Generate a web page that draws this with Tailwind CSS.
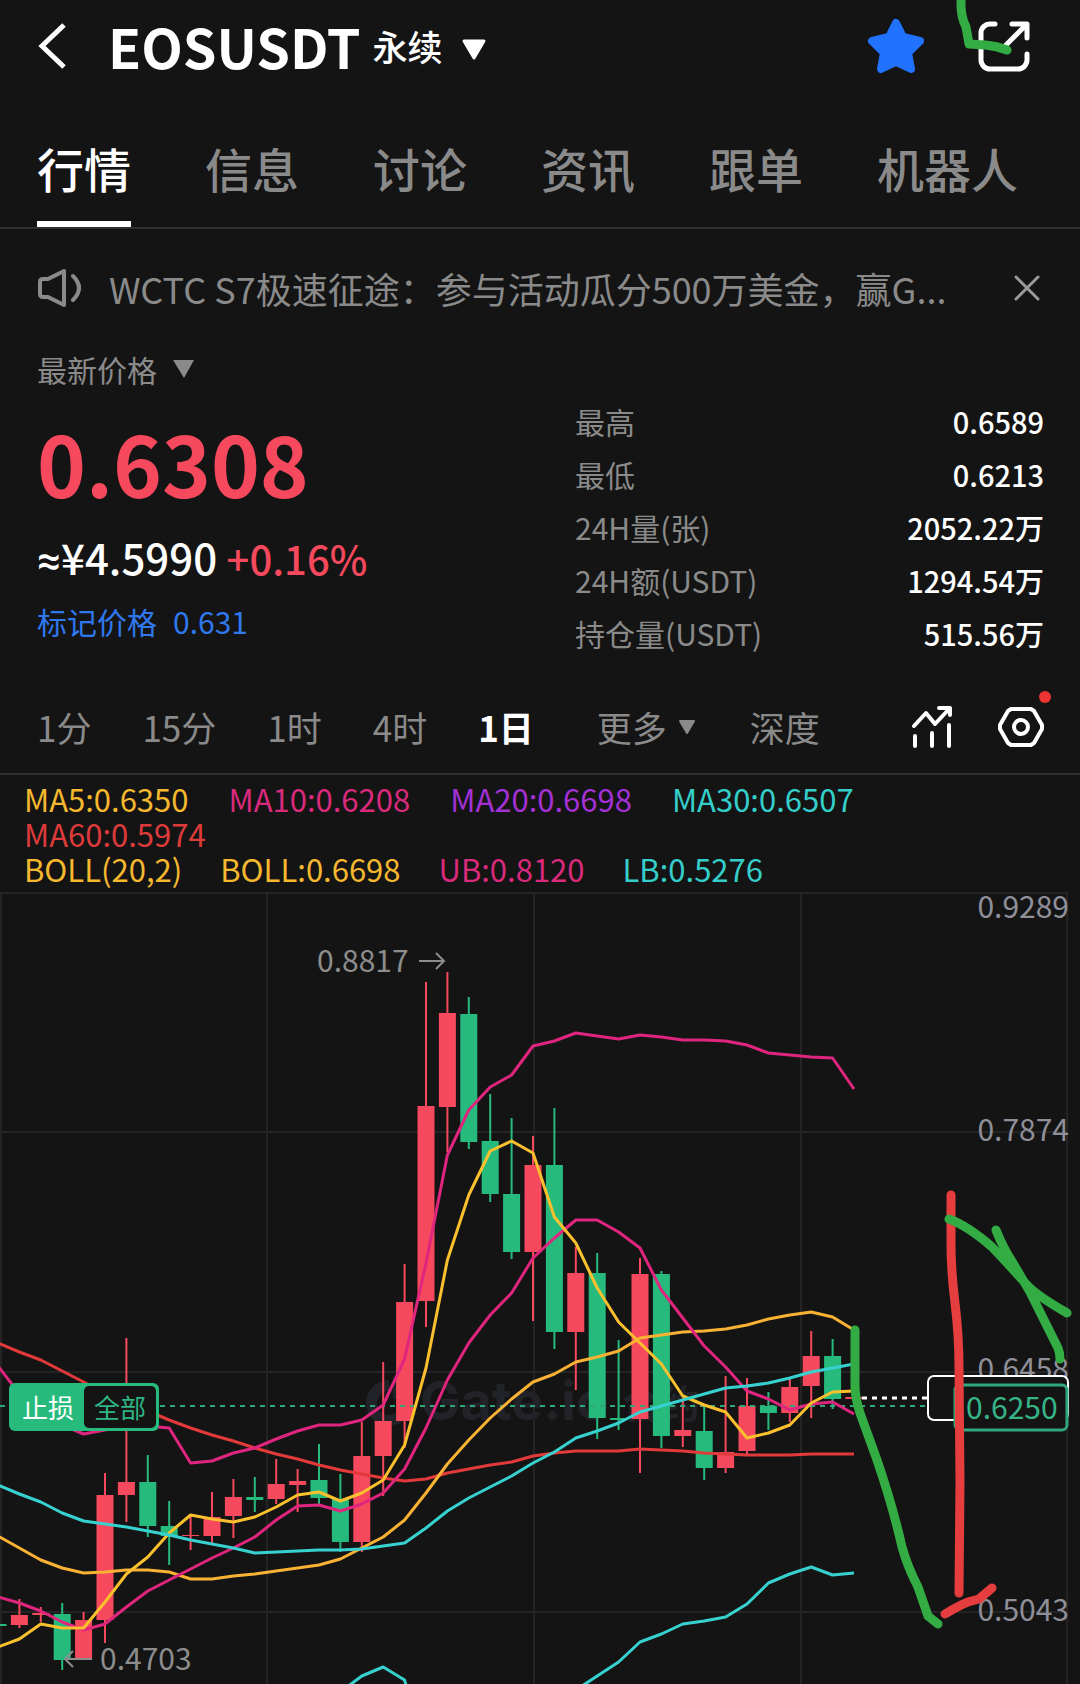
<!DOCTYPE html>
<html lang="zh-CN">
  <head>
    <meta charset="UTF-8" />
    <meta name="viewport" content="width=device-width, initial-scale=1.0" />
    <script src="https://cdn.jsdelivr.net/npm/@tailwindcss/browser@4"></script>
    <title>EOSUSDT 永续</title>
  </head>
  <body class="relative bg-[#141414] text-white font-['Noto_Sans_CJK_SC',sans-serif] overflow-x-hidden">
    <header class="flex items-center h-24 pb-[5px] pl-[38px] pr-[50px]">
      <button aria-label="返回" class="mr-[42px]">
        <svg class="w-7 h-[50px]" viewBox="0 0 28 50" fill="none" stroke="#fff" stroke-width="5"><path d="M26 4 4 25l22 21" /></svg>
      </button>
      <h1 class="text-[54px] leading-[60px] font-bold">EOSUSDT</h1>
      <button class="flex items-center gap-[18px] ml-3 text-[35px] leading-[44px] font-medium">
        永续
        <svg class="w-[26px] h-[22px] mt-2" viewBox="0 0 26 22"><path d="M3 2h20l-10 17z" fill="#fff" stroke="#fff" stroke-width="3" stroke-linejoin="round" /></svg>
      </button>
      <button aria-label="收藏" class="ml-auto">
        <svg class="w-[60px] h-[58px]" viewBox="864 16 60 58"><path d="M894 22l7 14 17 4-12 12 3 16-15-7-15 7 3-16-12-12 17-4z" fill="#2173ff" stroke="#2173ff" stroke-width="8" stroke-linejoin="round" /></svg>
      </button>
      <button aria-label="分享" class="ml-[52px]">
        <svg class="w-[52px] h-[54px]" viewBox="976 19 52 54" fill="none" stroke="#fff" stroke-width="5" stroke-linecap="round" stroke-linejoin="round"><path d="M993 24h-5a9 9 0 0 0-9 9v27a9 9 0 0 0 9 9h28a9 9 0 0 0 9-9v-6M1010 24h15v14M1024 25l-21 21" /></svg>
      </button>
    </header>

    <nav class="flex gap-[74px] pt-11 pl-[37px] border-b-2 border-[#303030] text-[47px] leading-[56px] font-medium text-[#8a8a8a] whitespace-nowrap">
      <a href="#" class="pb-[25px] border-b-[6px] border-white text-white">行情</a>
      <a href="#">信息</a>
      <a href="#">讨论</a>
      <a href="#">资讯</a>
      <a href="#">跟单</a>
      <a href="#">机器人</a>
    </nav>

    <div class="flex items-center pt-9 pl-[38px] pr-[38px] text-[#8a8a8a]">
      <svg class="shrink-0 w-11 h-10" viewBox="38 268 44 40" fill="none" stroke="#8a8a8a" stroke-width="4" stroke-linecap="round" stroke-linejoin="round"><path d="M43 279h5l16-8v34l-16-8h-5q-3 0-3-3v-12q0-3 3-3zM73 276q12 12 0 24" /></svg>
      <p class="flex-1 ml-[27px] text-[36px] leading-[46px] whitespace-nowrap">WCTC S7极速征途：参与活动瓜分500万美金，赢G...</p>
      <button aria-label="关闭" class="shrink-0">
        <svg class="w-[30px] h-[30px]" viewBox="0 0 30 30" stroke="#9a9a9a" stroke-width="3" stroke-linecap="round"><path d="M4 4l22 22M26 4 4 26" /></svg>
      </button>
    </div>

    <section class="grid grid-cols-[1fr_469px] pt-[38px] pl-[37px] pr-9">
      <div>
        <button class="flex items-center gap-4 text-[30px] leading-10 text-[#8a8a8a]">
          最新价格
          <svg class="w-[21px] h-[18px]" viewBox="0 0 21 18"><path d="M0 0h21L11 18z" fill="#8a8a8a" /></svg>
        </button>
        <p class="mt-[30px] text-[83px] leading-[86px] font-bold text-[#f6495d]">0.6308</p>
        <p class="mt-7 text-[42px] leading-[48px] font-medium"><span class="font-['Roboto']">≈</span>¥4.5990 <span class="text-[40px] text-[#f6495d]">+0.16%</span></p>
        <p class="mt-4 text-[30px] leading-10 text-[#2f78ee]">标记价格<span class="ml-4">0.631</span></p>
      </div>
      <dl class="mt-[46px] text-[30px] leading-[53px]">
        <div class="flex justify-between"><dt class="text-[#8a8a8a]">最高</dt><dd class="text-[29px] font-medium">0.6589</dd></div>
        <div class="flex justify-between"><dt class="text-[#8a8a8a]">最低</dt><dd class="text-[29px] font-medium">0.6213</dd></div>
        <div class="flex justify-between"><dt class="text-[#8a8a8a]">24H量(张)</dt><dd class="text-[29px] font-medium">2052.22万</dd></div>
        <div class="flex justify-between"><dt class="text-[#8a8a8a]">24H额(USDT)</dt><dd class="text-[29px] font-medium">1294.54万</dd></div>
        <div class="flex justify-between"><dt class="text-[#8a8a8a]">持仓量(USDT)</dt><dd class="text-[29px] font-medium">515.56万</dd></div>
      </dl>
    </section>

    <div class="flex items-center gap-[51px] pt-[41px] pb-5 pl-[37px] pr-[35px] border-b-2 border-[#303030] text-[35px] leading-[52px] text-[#8a8a8a] whitespace-nowrap">
      <button>1分</button>
      <button>15分</button>
      <button>1时</button>
      <button>4时</button>
      <button class="font-bold text-white">1日</button>
      <button class="flex items-center gap-3 ml-3">
        更多
        <svg class="w-4 h-[14px]" viewBox="0 0 16 14"><path d="M1 1h14l-7 12z" fill="#8a8a8a" stroke="#8a8a8a" stroke-width="2" stroke-linejoin="round" /></svg>
      </button>
      <button class="ml-1">深度</button>
      <button aria-label="指标" class="ml-auto">
        <svg class="w-11 h-11" viewBox="908 706 44 44" fill="none" stroke="#fff" stroke-width="4" stroke-linecap="round" stroke-linejoin="round"><path d="M912 727l12-13 9 11 15-16M937 709h11v7M913 737v10M930 734v13M947 726v21" /></svg>
      </button>
      <button aria-label="设置" class="relative -ml-2">
        <svg class="w-12 h-11" viewBox="996 705 48 44" fill="none" stroke="#fff" stroke-width="4" stroke-linejoin="round"><path d="M1010 709h20l3 2 8 14v4l-8 14-3 2h-20l-3-2-8-14v-4l8-14z" /><circle cx="1020" cy="727" r="7" /></svg>
        <span class="absolute -top-[14px] -right-[6px] w-3 h-3 rounded-full bg-[#ee3333]"></span>
      </button>
    </div>

    <div class="pt-[6px] pl-6 text-[31px] leading-[35px] whitespace-nowrap">
      <div class="flex gap-10">
        <span class="text-[#f5b82e]">MA5:0.6350</span>
        <span class="text-[#d92a7c]">MA10:0.6208</span>
        <span class="text-[#a331d6]">MA20:0.6698</span>
        <span class="text-[#35cfcb]">MA30:0.6507</span>
      </div>
      <div class="text-[#dd3b3b]">MA60:0.5974</div>
      <div class="flex gap-[38px]">
        <span class="text-[#f5b82e]">BOLL(20,2)</span>
        <span class="text-[#f5b82e]">BOLL:0.6698</span>
        <span class="text-[#d92a7c]">UB:0.8120</span>
        <span class="text-[#35cfcb]">LB:0.5276</span>
      </div>
    </div>

    <svg class="block w-full" viewBox="0 886 1080 798">
      <path d="M0 893h1068M0 1132h1068M0 1372h1068M0 1612h1068M1 892v792M267 892v792M534 892v792M801 892v792M1067 892v792" stroke="#242424" stroke-width="2" fill="none" />
      <g fill="#212328" font-weight="700">
        <path d="M389 1380v11a12 12 0 1 0 12 12h11a23 23 0 1 1-23-23zM393 1380v19h19a19 19 0 0 0-19-19z" />
        <text x="420" y="1420" font-size="54" font-family="Inter">Gate.io</text>
        <text x="622" y="1418" font-size="39">合约</text>
      </g>
      <g fill="#8f8f99" font-size="30" text-anchor="end">
        <text x="1069" y="918">0.9289</text>
        <text x="1069" y="1141">0.7874</text>
        <text x="1069" y="1380">0.6458</text>
        <text x="1069" y="1621">0.5043</text>
      </g>
      <g id="candles"></g>
      <path d="M0 1406h954" stroke="#2fa97c" stroke-width="2" stroke-dasharray="5 5" />
      <g id="lines" fill="none" stroke-width="3" stroke-linejoin="round"></g>
      <g fill="#8d8d8d" font-size="30">
        <text x="317" y="972">0.8817</text>
        <text x="100" y="1670">0.4703</text>
        <path d="M419 961h25M436 953l8 8-8 8M92 1659H66M73 1651l-8 8 8 8" fill="none" stroke="#8d8d8d" stroke-width="2" />
      </g>

      <!-- stop-loss tag -->
      <rect x="9" y="1383" width="150" height="48" rx="6" fill="#26bb7d" />
      <rect x="84" y="1386" width="72" height="42" rx="5" fill="#141414" />
      <g font-size="26">
        <text x="22" y="1418" fill="#fff">止损</text>
        <text x="94" y="1418" fill="#2fb583">全部</text>
      </g>

      <!-- price tags -->
      <path d="M862 1398h66" stroke="#fff" stroke-width="3" stroke-dasharray="5 5" />
      <rect x="928" y="1376" width="140" height="44" rx="6" fill="#141414" stroke="#fff" stroke-width="2" />
      <rect x="955" y="1385" width="112" height="45" rx="5" fill="#141414" stroke="#2fa97c" stroke-width="3" />
      <text x="966" y="1419" font-size="30" fill="#35b587">0.6250</text>

      <!-- hand-drawn strokes -->
      <g fill="none" stroke-width="9" stroke-linecap="round" stroke-linejoin="round">
        <path d="M951 1195V1245Q951 1270 955 1303T959 1367L960 1483 959 1593M945 1614Q960 1605 968 1602 975 1600 979 1599L992 1588" stroke="#e63e3e" />
        <path d="M855 1330V1385Q855 1398 860 1413L877 1460Q893 1507 902 1547 908 1568 918 1587L928 1616 938 1624M949 1219Q968 1226 992 1247 1010 1266 1027 1285 1036 1295 1067 1313M996 1230Q1003 1248 1013 1263L1030 1292 1058 1348Q1060 1353 1060 1359" stroke="#34ac44" />
      </g>
    </svg>

    <svg class="absolute top-0 right-[66px] w-[60px] h-[60px]" viewBox="954 0 60 60" fill="none" stroke="#34ac44" stroke-width="9" stroke-linecap="round" stroke-linejoin="round"><path d="M961-5V5Q961 17 966 27L969 44 985 45Q997 46 1007 50" /></svg>

    <script>
      // [rising, high, low, body top, body bottom]
      const candles = [
        [0, 1624, 1626, 1624, 1626],
        [1, 1599, 1628, 1615, 1625],
        [1, 1607, 1622, 1613, 1615],
        [0, 1603, 1670, 1614, 1660],
        [1, 1612, 1660, 1620, 1660],
        [1, 1473, 1643, 1495, 1620],
        [1, 1338, 1522, 1482, 1495],
        [0, 1455, 1537, 1482, 1526],
        [0, 1501, 1565, 1526, 1536],
        [1, 1515, 1550, 1535, 1536],
        [1, 1492, 1544, 1517, 1536],
        [1, 1479, 1538, 1497, 1516],
        [0, 1477, 1512, 1497, 1500],
        [1, 1459, 1504, 1484, 1499],
        [1, 1469, 1512, 1481, 1485],
        [0, 1444, 1504, 1480, 1498],
        [0, 1474, 1552, 1499, 1542],
        [1, 1422, 1552, 1456, 1542],
        [1, 1362, 1496, 1421, 1456],
        [1, 1264, 1448, 1302, 1421],
        [1, 982, 1327, 1106, 1301],
        [1, 972, 1152, 1013, 1107],
        [0, 997, 1149, 1014, 1142],
        [0, 1094, 1202, 1141, 1194],
        [0, 1118, 1259, 1194, 1252],
        [1, 1136, 1321, 1165, 1252],
        [0, 1108, 1349, 1165, 1332],
        [1, 1247, 1390, 1273, 1332],
        [0, 1253, 1439, 1273, 1418],
        [0, 1340, 1430, 1418, 1420],
        [1, 1258, 1473, 1274, 1419],
        [0, 1271, 1448, 1274, 1436],
        [1, 1398, 1447, 1430, 1436],
        [0, 1407, 1480, 1431, 1468],
        [1, 1376, 1473, 1452, 1468],
        [1, 1378, 1454, 1406, 1451],
        [0, 1392, 1430, 1406, 1413],
        [1, 1378, 1422, 1387, 1413],
        [1, 1331, 1418, 1356, 1386],
        [0, 1339, 1409, 1356, 1399],
        [1, 1397, 1399, 1397, 1399],
      ]

      const lines = [
        // MA60
        ["#e23a3a", [1343, 1352, 1360, 1371, 1382, 1393, 1402, 1411, 1420, 1428, 1435, 1441, 1448, 1454, 1459, 1465, 1470, 1474, 1478, 1481, 1479, 1473, 1469, 1465, 1462, 1456, 1453, 1451, 1451, 1451, 1449, 1450, 1451, 1453, 1454, 1455, 1455, 1455, 1454, 1454, 1454]],
        // BOLL
        ["#f9b233", [1536, 1548, 1560, 1568, 1573, 1572, 1570, 1570, 1572, 1579, 1579, 1576, 1574, 1571, 1568, 1565, 1559, 1548, 1537, 1520, 1493, 1464, 1440, 1418, 1399, 1382, 1374, 1362, 1357, 1351, 1338, 1335, 1332, 1331, 1329, 1325, 1319, 1315, 1312, 1317, 1330]],
        // LB
        ["#37d2d0", [1800, 1800, 1800, 1800, 1800, 1800, 1800, 1800, 1800, 1800, 1800, 1800, 1800, 1760, 1740, 1710, 1692, 1676, 1667, 1680, 1760, 1800, 1800, 1780, 1760, 1720, 1700, 1690, 1676, 1662, 1642, 1634, 1624, 1621, 1617, 1604, 1583, 1574, 1567, 1575, 1573]],
        // UB
        ["#e0257f", [1366, 1394, 1412, 1425, 1434, 1430, 1427, 1426, 1428, 1463, 1461, 1453, 1448, 1439, 1431, 1425, 1425, 1420, 1405, 1359, 1263, 1155, 1110, 1087, 1075, 1046, 1041, 1033, 1036, 1039, 1035, 1037, 1040, 1040, 1041, 1045, 1053, 1055, 1057, 1058, 1089]],
        // MA10
        ["#e0257f", [1597, 1603, 1611, 1622, 1630, 1624, 1607, 1591, 1580, 1569, 1558, 1548, 1537, 1520, 1506, 1505, 1511, 1504, 1493, 1469, 1428, 1380, 1343, 1315, 1293, 1258, 1238, 1220, 1220, 1232, 1248, 1290, 1318, 1346, 1367, 1391, 1399, 1410, 1404, 1402, 1414]],
        // MA5
        ["#fbc02d", [1647, 1639, 1624, 1628, 1628, 1602, 1574, 1557, 1533, 1515, 1519, 1522, 1517, 1507, 1495, 1492, 1501, 1493, 1480, 1445, 1368, 1260, 1195, 1151, 1141, 1153, 1217, 1243, 1288, 1322, 1343, 1364, 1396, 1405, 1412, 1438, 1433, 1425, 1403, 1392, 1391]],
        // MA30
        ["#37d2d0", [1485, 1494, 1502, 1513, 1521, 1524, 1527, 1531, 1535, 1540, 1544, 1548, 1553, 1552, 1551, 1550, 1550, 1549, 1546, 1543, 1528, 1511, 1498, 1487, 1476, 1463, 1452, 1438, 1431, 1423, 1412, 1406, 1400, 1394, 1388, 1386, 1383, 1378, 1372, 1368, 1364]],
      ]

      const x = (i) => -2 + i * 21.4

      document.querySelector("#candles").innerHTML = candles
        .map(([up, high, low, top, bottom], i) => {
          const color = up ? "#f6495d" : "#26bb7d"
          return `<g fill="${color}">
            <rect x="${x(i) - 1}" y="${high}" width="2" height="${low - high}" />
            <rect x="${x(i) - 8.5}" y="${top}" width="17" height="${bottom - top}" />
          </g>`
        })
        .join("")

      document.querySelector("#lines").innerHTML = lines
        .map(([color, ys]) => `<polyline stroke="${color}" points="${ys.map((y, i) => `${x(i)},${y}`).join(" ")}" />`)
        .join("")
    </script>
  </body>
</html>
